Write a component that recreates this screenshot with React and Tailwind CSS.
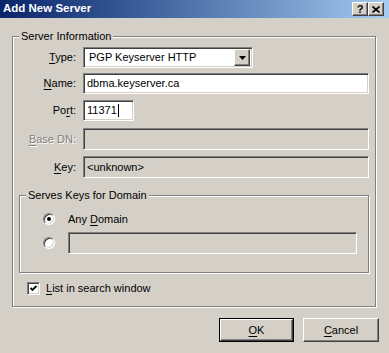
import React from 'react';

const font = { fontFamily: '"Liberation Sans", Arial, sans-serif' };

const sunken =
  'border border-t-[#808080] border-l-[#808080] border-r-white border-b-white shadow-[inset_1px_1px_0_#404040,inset_-1px_-1px_0_#d4d0c8]';
const raised =
  'border border-t-white border-l-white border-r-[#404040] border-b-[#404040] shadow-[inset_-1px_-1px_0_#808080]';
const etched =
  'border border-[#808080] shadow-[1px_1px_0_#fff,inset_1px_1px_0_#fff]';

const Label = ({ pre = '', u, post, disabled }) => (
  <div
    className={`w-[63px] shrink-0 text-right ${
      disabled ? 'text-[#808080] [text-shadow:1px_1px_0_#fff]' : 'text-black'
    }`}
  >
    {pre}
    <span className="underline underline-offset-[2px]">{u}</span>
    {post}
  </div>
);

const GroupBox = ({ title, className, children }) => (
  <div className={`relative ${etched} ${className}`}>
    <div className="absolute left-[6px] -top-[8px] h-[14px] leading-[14px] px-[2px] bg-[#d4d0c8]">
      {title}
    </div>
    {children}
  </div>
);

const Radio = ({ checked }) => (
  <div
    className={`w-[12px] h-[12px] rounded-full bg-white shrink-0 flex items-center justify-center ${sunken}`}
  >
    {checked && <div className="w-[4px] h-[4px] rounded-full bg-black" />}
  </div>
);

export default function App() {
  return (
    <div
      className="w-[389px] h-[353px] overflow-hidden bg-[#d4d0c8] text-[11px] text-black"
      style={font}
    >
      {/* title bar */}
      <div className="h-[18px] flex items-center bg-gradient-to-r from-[#0a246a] to-[#a6caf0] pl-[3px] pr-[5px]">
        <div className="text-white font-bold text-[11.5px] leading-none flex-1">Add New Server</div>
        <div className="flex">
          <div className={`w-[16px] h-[14px] bg-[#d4d0c8] flex items-center justify-center font-bold text-[11px] leading-none ${raised}`}>
            ?
          </div>
          <div className={`w-[16px] h-[14px] bg-[#d4d0c8] flex items-center justify-center ${raised}`}>
            <svg width="8" height="7" viewBox="0 0 8 7">
              <path d="M0.5 0.5 L7.5 6.5 M7.5 0.5 L0.5 6.5" stroke="#000" strokeWidth="1.6" />
            </svg>
          </div>
        </div>
      </div>

      {/* body */}
      <div className="pl-[12px] pt-[18px]">
        <GroupBox title="Server Information" className="w-[364px] h-[271px] pt-[10px]">
          <div className="flex items-center">
            <Label u="T" post="ype:" />
            <div className={`ml-[7px] w-[170px] h-[21px] bg-white flex items-center p-[2px] ${sunken}`}>
              <div className="flex-1 pl-[3px]">PGP Keyserver HTTP</div>
              <div className={`w-[16px] h-[17px] bg-[#d4d0c8] flex items-center justify-center ${raised}`}>
                <svg width="7" height="4" viewBox="0 0 7 4">
                  <path d="M0 0 H7 L3.5 4 Z" fill="#000" />
                </svg>
              </div>
            </div>
          </div>

          <div className="flex items-center mt-[5px]">
            <Label u="N" post="ame:" />
            <div className={`ml-[7px] w-[286px] h-[21px] bg-white flex items-center pl-[3px] ${sunken}`}>
              dbma.keyserver.ca
            </div>
          </div>

          <div className="flex items-center mt-[6px]">
            <Label pre="Po" u="r" post="t:" />
            <div className={`ml-[7px] w-[51px] h-[21px] bg-white flex items-center pl-[3px] ${sunken}`}>
              11371
              <div className="w-[1px] h-[13px] bg-black ml-[1px]" />
            </div>
          </div>

          <div className="flex items-center mt-[7px]">
            <Label u="B" post="ase DN:" disabled />
            <div className={`ml-[7px] w-[286px] h-[22px] bg-[#d4d0c8] ${sunken}`} />
          </div>

          <div className="flex items-center mt-[6px]">
            <Label u="K" post="ey:" />
            <div className={`ml-[7px] w-[286px] h-[22px] bg-[#d4d0c8] flex items-center pl-[3px] ${sunken}`}>
              &lt;unknown&gt;
            </div>
          </div>

          <GroupBox title="Serves Keys for Domain" className="ml-[6px] mt-[17px] w-[350px] h-[78px] pl-[23px] pt-[16px]">
            <div className="flex items-center h-[14px]">
              <Radio checked />
              <div className="ml-[13px]">
                Any <span className="underline underline-offset-[2px]">D</span>omain
              </div>
            </div>
            <div className="flex items-center h-[22px] mt-[6px]">
              <Radio />
              <div className={`ml-[13px] w-[289px] h-[22px] bg-[#d4d0c8] ${sunken}`} />
            </div>
          </GroupBox>

          <div className="flex items-center ml-[14px] mt-[7px]">
            <div className={`w-[13px] h-[13px] bg-white flex items-center justify-center ${sunken}`}>
              <svg width="7" height="7" viewBox="0 0 7 7">
                <path d="M0.5 3 L2.5 5 L6.5 1" stroke="#000" strokeWidth="1.8" fill="none" />
              </svg>
            </div>
            <div className="ml-[6px]">
              <span className="underline underline-offset-[2px]">L</span>ist in search window
            </div>
          </div>
        </GroupBox>

        {/* buttons */}
        <div className="flex mt-[11px] pl-[207px] gap-[9px]">
          <div className="w-[75px] h-[24px] border border-black">
            <div className={`w-full h-full bg-[#d4d0c8] flex items-center justify-center ${raised}`}>
              <span>
                <span className="underline underline-offset-[2px]">O</span>K
              </span>
            </div>
          </div>
          <div className={`w-[76px] h-[24px] bg-[#d4d0c8] flex items-center justify-center ${raised}`}>
            <span>
              <span className="underline underline-offset-[2px]">C</span>ancel
            </span>
          </div>
        </div>
      </div>
    </div>
  );
}
